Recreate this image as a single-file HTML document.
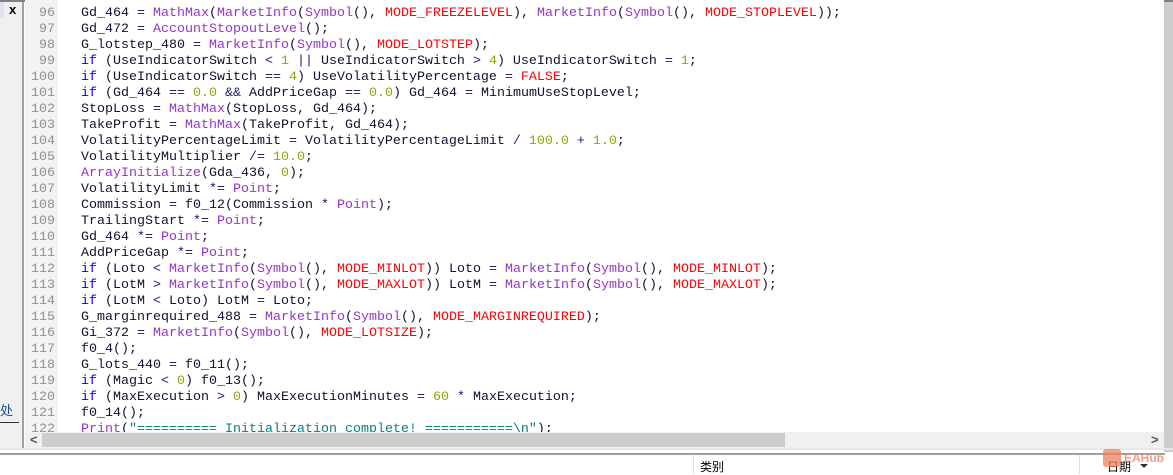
<!DOCTYPE html>
<html><head><meta charset="utf-8"><style>
*{margin:0;padding:0;box-sizing:border-box}
body{width:1173px;height:474px;overflow:hidden;background:#fff;position:relative;font-family:"Liberation Sans","Noto Sans CJK SC",sans-serif}
.abs{position:absolute}
#code{position:absolute;left:25px;top:0;width:1139px;height:432px;overflow:hidden;background:#fff}
#gut{position:absolute;left:0;top:0;width:33px;height:432px;background:#f3f3f3}
.ln{position:absolute;left:0;width:30px;text-align:right;font:13.33px/16px "Liberation Mono",monospace;color:#909090}
.cl{position:absolute;left:56px;white-space:pre;font:13.33px/16px "Liberation Mono",monospace;color:#101030}
.k{color:#0000ff}.f{color:#9932cc}.c{color:#ff0000}.n{color:#8aa800}.s{color:#008080}.o{color:#202070}
</style></head><body>
<div class="abs" style="left:0;top:0;width:1173px;height:2px;background:#808080"></div>
<div class="abs" style="left:0;top:2px;width:23px;height:446px;background:#f0f0f0"></div>
<div class="abs" style="left:0;top:2px;width:4px;height:16px;background:#dde4ee"></div>
<div class="abs" style="left:9px;top:3px;font:bold 13px/14px 'Liberation Sans';color:#000">x</div>
<div class="abs" style="left:0;top:400px;font-size:13px;color:#2050a0">处</div>
<div class="abs" style="left:0;top:422px;width:19px;height:1px;background:#333"></div>
<div class="abs" style="left:22px;top:2px;width:2px;height:446px;background:#a0a0a0"></div>
<div id="code"><div id="gut"></div>
<div id="lines"></div>
</div>
<div class="abs" style="left:1164px;top:2px;width:9px;height:450px;background:#cdcdcd"></div>
<div class="abs" style="left:25px;top:432px;width:1139px;height:16px;background:#f0f0f0"></div>
<div class="abs" style="left:30px;top:433px;font:bold 13px/14px 'Liberation Sans';color:#555">&lt;</div>
<div class="abs" style="left:42px;top:433px;width:743px;height:14px;background:#cdcdcd"></div>
<div class="abs" style="left:1151px;top:433px;font:bold 13px/14px 'Liberation Sans';color:#555">&gt;</div>
<div class="abs" style="left:0;top:448px;width:1173px;height:2px;background:#e8e8e8"></div>
<div class="abs" style="left:0;top:453px;width:1165px;height:2px;background:#a0a0a0"></div>
<div class="abs" style="left:693px;top:455px;width:1px;height:19px;background:#e0e0e0"></div>
<div class="abs" style="left:1079px;top:455px;width:1px;height:19px;background:#e0e0e0"></div>
<div class="abs" style="left:700px;top:458px;font-size:12px;color:#000">类别</div>
<div class="abs" style="left:1107px;top:458px;font-size:12px;color:#000">日期</div>
<div class="abs" style="left:1140px;top:464px;width:0;height:0;border-left:4px solid transparent;border-right:4px solid transparent;border-top:4px solid #333"></div>
<div class="abs" style="left:1103px;top:449px;width:18px;height:18px;background:#f08060;opacity:.75;border-radius:3px"></div>
<div class="abs" style="left:1124px;top:451px;font:bold 12px 'Liberation Sans';color:#f08060;opacity:.75">EAHub</div>
<script>
var L=[
[96,'Gd_464 <o>=</o> <f>MathMax</f>(<f>MarketInfo</f>(<f>Symbol</f>(), <c>MODE_FREEZELEVEL</c>), <f>MarketInfo</f>(<f>Symbol</f>(), <c>MODE_STOPLEVEL</c>));'],
[97,'Gd_472 <o>=</o> <f>AccountStopoutLevel</f>();'],
[98,'G_lotstep_480 <o>=</o> <f>MarketInfo</f>(<f>Symbol</f>(), <c>MODE_LOTSTEP</c>);'],
[99,'<k>if</k> (UseIndicatorSwitch <o>&lt;</o> <n>1</n> <o>||</o> UseIndicatorSwitch <o>&gt;</o> <n>4</n>) UseIndicatorSwitch <o>=</o> <n>1</n>;'],
[100,'<k>if</k> (UseIndicatorSwitch <o>==</o> <n>4</n>) UseVolatilityPercentage <o>=</o> <c>FALSE</c>;'],
[101,'<k>if</k> (Gd_464 <o>==</o> <n>0.0</n> <o>&amp;&amp;</o> AddPriceGap <o>==</o> <n>0.0</n>) Gd_464 <o>=</o> MinimumUseStopLevel;'],
[102,'StopLoss <o>=</o> <f>MathMax</f>(StopLoss, Gd_464);'],
[103,'TakeProfit <o>=</o> <f>MathMax</f>(TakeProfit, Gd_464);'],
[104,'VolatilityPercentageLimit <o>=</o> VolatilityPercentageLimit <o>/</o> <n>100.0</n> <o>+</o> <n>1.0</n>;'],
[105,'VolatilityMultiplier <o>/=</o> <n>10.0</n>;'],
[106,'<f>ArrayInitialize</f>(Gda_436, <n>0</n>);'],
[107,'VolatilityLimit <o>*=</o> <f>Point</f>;'],
[108,'Commission <o>=</o> f0_12(Commission <o>*</o> <f>Point</f>);'],
[109,'TrailingStart <o>*=</o> <f>Point</f>;'],
[110,'Gd_464 <o>*=</o> <f>Point</f>;'],
[111,'AddPriceGap <o>*=</o> <f>Point</f>;'],
[112,'<k>if</k> (Loto <o>&lt;</o> <f>MarketInfo</f>(<f>Symbol</f>(), <c>MODE_MINLOT</c>)) Loto <o>=</o> <f>MarketInfo</f>(<f>Symbol</f>(), <c>MODE_MINLOT</c>);'],
[113,'<k>if</k> (LotM <o>&gt;</o> <f>MarketInfo</f>(<f>Symbol</f>(), <c>MODE_MAXLOT</c>)) LotM <o>=</o> <f>MarketInfo</f>(<f>Symbol</f>(), <c>MODE_MAXLOT</c>);'],
[114,'<k>if</k> (LotM <o>&lt;</o> Loto) LotM <o>=</o> Loto;'],
[115,'G_marginrequired_488 <o>=</o> <f>MarketInfo</f>(<f>Symbol</f>(), <c>MODE_MARGINREQUIRED</c>);'],
[116,'Gi_372 <o>=</o> <f>MarketInfo</f>(<f>Symbol</f>(), <c>MODE_LOTSIZE</c>);'],
[117,'f0_4();'],
[118,'G_lots_440 <o>=</o> f0_11();'],
[119,'<k>if</k> (Magic <o>&lt;</o> <n>0</n>) f0_13();'],
[120,'<k>if</k> (MaxExecution <o>&gt;</o> <n>0</n>) MaxExecutionMinutes <o>=</o> <n>60</n> <o>*</o> MaxExecution;'],
[121,'f0_14();'],
[122,'<f>Print</f>(<s>"========== Initialization complete! ===========\\n"</s>);']];
var h='';
L.forEach(function(r,i){var t=6+i*16;
var s=r[1].replace(/<(\w)>/g,'<span class="$1">').replace(/<\/\w>/g,'</span>');
h+='<div class="ln" style="top:'+t+'px">'+r[0]+'</div><div class="cl" style="top:'+t+'px">'+s+'</div>';});
document.getElementById('lines').innerHTML=h;
</script>
</body></html>
